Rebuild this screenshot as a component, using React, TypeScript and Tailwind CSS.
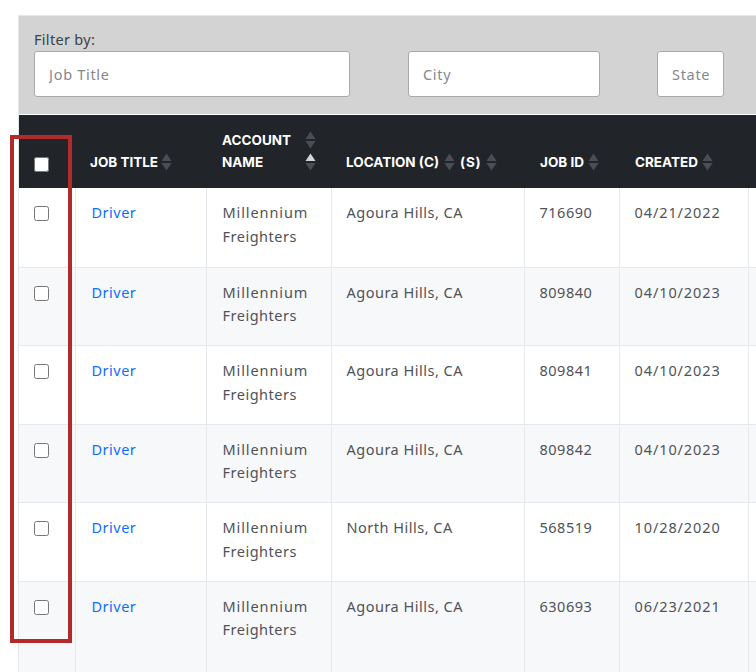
import React from "react";

const rows = [
  { location: "Agoura Hills, CA", id: "716690", created: "04/21/2022" },
  { location: "Agoura Hills, CA", id: "809840", created: "04/10/2023" },
  { location: "Agoura Hills, CA", id: "809841", created: "04/10/2023" },
  { location: "Agoura Hills, CA", id: "809842", created: "04/10/2023" },
  { location: "North Hills, CA", id: "568519", created: "10/28/2020" },
  { location: "Agoura Hills, CA", id: "630693", created: "06/23/2021" },
];

function SortIcon({ active }: { active?: boolean }) {
  return (
    <svg width="11" height="18" viewBox="0 0 11 18" className="inline-block shrink-0">
      <path d="M5.5 0.5 L10.5 8 H0.5 Z" fill={active ? "#d4d5d6" : "#4a4d53"} />
      <path d="M0.5 10 H10.5 L5.5 17.5 Z" fill="#4a4d53" />
    </svg>
  );
}

export default function App() {
  return (
    <div className="relative h-[672px] w-[756px] overflow-hidden bg-white font-['Noto_Sans',sans-serif] text-[#4f5358]">
      <div className="ml-[18px] mt-[15px] w-[780px] border-l border-t border-[#e3e6ea]">
        {/* Filters */}
        <div className="h-[98px] bg-[#d3d3d3] pl-[15px] pt-[14px]">
          <div className="text-[14.5px] leading-[18px] tracking-[0.3px] text-[#3d4146]">Filter by:</div>
          <div className="mt-[3px] flex">
            <input
              placeholder="Job Title"
              className="h-[46px] w-[316px] rounded-[3px] border border-[#a9a9a9] bg-white px-[14px] text-[14.5px] tracking-[0.7px] placeholder:text-[#85888c]"
            />
            <input
              placeholder="City"
              className="ml-[58px] h-[46px] w-[192px] rounded-[3px] border border-[#a9a9a9] bg-white px-[14px] text-[14.5px] tracking-[0.7px] placeholder:text-[#85888c]"
            />
            <input
              placeholder="State"
              className="ml-[57px] h-[46px] w-[67px] rounded-[3px] border border-[#a9a9a9] bg-white px-[14px] text-[14.5px] tracking-[0.7px] placeholder:text-[#85888c]"
            />
          </div>
        </div>

        <table className="mt-px w-[780px] table-fixed border-collapse text-left">
          <thead className="bg-[#212529] font-['Inter',sans-serif] text-[13.5px] font-bold leading-[22px] text-white">
            <tr className="h-[73px]">
              <th className="w-[56px] pb-[16px] pl-[15px] align-bottom">
                <input type="checkbox" className="block h-[15px] w-[15px]" />
              </th>
              <th className="w-[131px] pb-[15px] pl-[15px] align-bottom">
                <div className="flex items-center gap-[3px]">
                  JOB TITLE <SortIcon />
                </div>
              </th>
              <th className="w-[125px] pb-[15px] pl-[16px] align-bottom">
                <div className="flex justify-between pr-[15px]">
                  <div>
                    ACCOUNT
                    <br />
                    NAME
                  </div>
                  <div className="flex flex-col gap-[4px] pt-[2px]">
                    <SortIcon />
                    <SortIcon active />
                  </div>
                </div>
              </th>
              <th className="w-[193px] pb-[15px] pl-[15px] align-bottom">
                <div className="flex items-center gap-[5px]">
                  LOCATION (C) <SortIcon />
                  <span className="tracking-[0.8px]">(S)</span> <SortIcon />
                </div>
              </th>
              <th className="w-[95px] pb-[15px] pl-[16px] align-bottom">
                <div className="flex items-center gap-[4px]">
                  JOB ID <SortIcon />
                </div>
              </th>
              <th className="w-[129px] pb-[15px] pl-[16px] align-bottom">
                <div className="flex items-center gap-[4px]">
                  CREATED <SortIcon />
                </div>
              </th>
              <th />
            </tr>
          </thead>
          <tbody className="text-[14.5px] leading-[23.5px] tracking-[0.5px]">
            {rows.map((row, i) => (
              <tr
                key={row.id}
                className={`${i % 2 === 1 ? "bg-[#f7f8fa]" : "bg-white"} ${
                  i === 5 ? "h-[100px]" : i === 0 ? "h-[79px]" : "h-[78.5px]"
                }`}
              >
                <td className="border border-l-0 border-t-0 border-[#e6e9ed] pl-[15px] pt-[18px] align-top">
                  <input type="checkbox" className="block h-[15px] w-[15px]" />
                </td>
                <td className="border border-t-0 border-[#e6e9ed] pl-[16px] pt-[13px] align-top text-[#0d6efd]">
                  Driver
                </td>
                <td className="border border-t-0 border-[#e6e9ed] pl-[16px] pt-[13px] align-top">
                  <span className="tracking-[0.9px]">Millennium</span>
                  <br />
                  Freighters
                </td>
                <td className="border border-t-0 border-[#e6e9ed] pl-[15px] pt-[13px] align-top">
                  {row.location}
                </td>
                <td className="border border-t-0 border-[#e6e9ed] pl-[15px] pt-[13px] align-top">{row.id}</td>
                <td className="border border-t-0 border-[#e6e9ed] pl-[15px] pt-[13px] align-top tracking-[0.9px]">
                  {row.created}
                </td>
                <td className="border border-t-0 border-[#e6e9ed]" />
              </tr>
            ))}
          </tbody>
        </table>
      </div>

      {/* Red highlight box */}
      <div className="absolute left-[10px] top-[135px] h-[508px] w-[62px] border-4 border-[#b22a2a]" />
    </div>
  );
}
